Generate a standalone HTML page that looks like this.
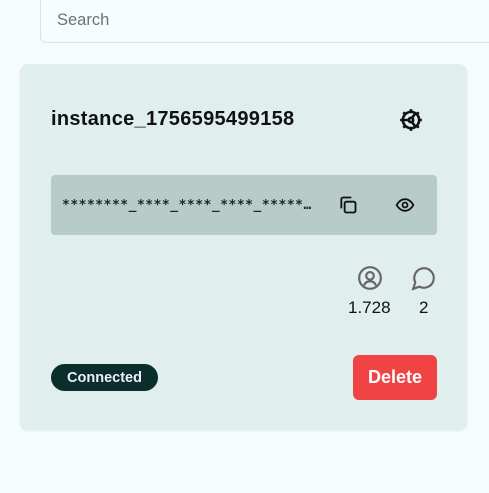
<!DOCTYPE html>
<html><head><style>
body{margin:0;width:489px;height:493px;background:#f4fcfd;font-family:"Liberation Sans",sans-serif;position:relative;overflow:hidden}
.search{position:absolute;left:40px;top:-10px;width:460px;height:53px;border:1px solid #dbe3e5;border-radius:6px;background:#f6fdfe;box-sizing:border-box}
.search span{position:absolute;left:16px;top:20px;font-size:16.5px;color:#6b7378}
.card{position:absolute;left:20px;top:64px;width:447px;height:366px;background:#e0eeee;border-radius:8px;box-shadow:0 1px 2px rgba(0,0,0,.08)}
.title{position:absolute;left:31px;top:44px;font-size:20px;font-weight:bold;color:#111;letter-spacing:0.3px}
.key{position:absolute;left:31px;top:111px;width:386px;height:60px;background:#b7cbc9;border-radius:4px}
.key .t{position:absolute;left:11px;top:23px;font-size:13px;font-weight:bold;letter-spacing:0.5px;color:#1a2530;font-family:"DejaVu Sans Mono",monospace}
.pill{position:absolute;left:31px;top:300px;width:107px;height:27px;border-radius:14px;background:#0a2e2c;color:#eef;font-size:14.5px;font-weight:bold;text-align:center;line-height:28px}
.del{position:absolute;left:333px;top:291px;width:84px;height:45px;border-radius:6px;background:#f04444;color:#fff;font-size:18px;font-weight:bold;text-align:center;line-height:45px}
.num{position:absolute;top:234px;font-size:17px;color:#111}
svg{position:absolute}
</style></head><body>
<div class="search"><span>Search</span></div>
<div class="card">
<div class="title">instance_1756595499158</div>
<svg style="left:378px;top:43px" width="26" height="26" viewBox="0 0 24 24" fill="none" stroke="#111" stroke-width="2.4"><circle cx="12" cy="12" r="7.5"/><circle cx="12" cy="12" r="2"/><path d="M12 2v3M12 19v3M2 12h3M19 12h3M4.9 4.9l2 2M17.1 17.1l2 2M4.9 19.1l2-2M17.1 6.9l2-2M10 12H5M13 10l3-4M13 14l3 4"/></svg>
<div class="key"><span class="t">********_****_****_****_*****…</span>
<svg style="left:287px;top:20px" width="20" height="20" viewBox="0 0 24 24" fill="none" stroke="#111" stroke-width="2.2"><rect x="8" y="8" width="13" height="13" rx="2"/><path d="M4 16V5a2 2 0 0 1 2-2h10"/></svg>
<svg style="left:343px;top:20px" width="22" height="20" viewBox="0 0 24 24" fill="none" stroke="#111" stroke-width="2.2"><path d="M2 12s3.5-7 10-7 10 7 10 7-3.5 7-10 7S2 12 2 12z"/><circle cx="12" cy="12" r="3"/></svg>
</div>
<svg style="left:337px;top:201px" width="26" height="26" viewBox="0 0 24 24" fill="none" stroke="#666" stroke-width="2"><circle cx="12" cy="12" r="10"/><circle cx="12" cy="10" r="3.5"/><path d="M6.5 19c1-3 3-4 5.5-4s4.5 1 5.5 4"/></svg>
<svg style="left:391px;top:201px" width="26" height="26" viewBox="0 0 24 24" fill="none" stroke="#666" stroke-width="2"><path d="M7.9 20A9 9 0 1 0 4 16.1L2 22z"/></svg>
<div class="num" style="left:328px">1.728</div>
<div class="num" style="left:399px">2</div>
<div class="pill">Connected</div>
<div class="del">Delete</div>
</div>
</body></html>
